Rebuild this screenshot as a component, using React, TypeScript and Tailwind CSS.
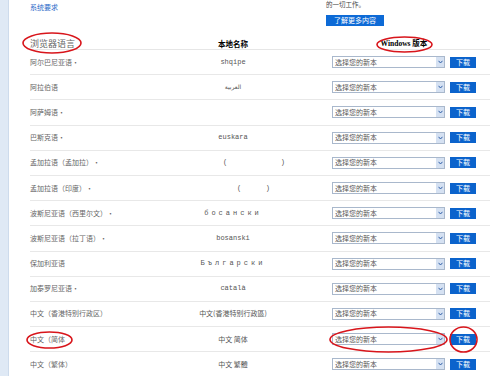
import React from "react";

type Row = { lang: string; local: React.ReactNode };

const cjk = "font-['Noto_Sans_CJK_SC',sans-serif]";
const mono = "font-['Liberation_Mono','Noto_Sans_CJK_SC',monospace]";

function Paren({ left, width }: { left: number; width: number }) {
  return (
    <div className={`w-full text-left text-[#555] ${mono}`} style={{ paddingLeft: left }}>
      <span className="inline-flex justify-between" style={{ width }}>
        <span>(</span>
        <span>)</span>
      </span>
    </div>
  );
}

const rows: Row[] = [
  { lang: "阿尔巴尼亚语•", local: <span className={mono}>shqipe</span> },
  { lang: "阿拉伯语", local: <span className="font-['DejaVu_Sans',sans-serif] text-[6px]">العربية</span> },
  { lang: "阿萨姆语•", local: "" },
  { lang: "巴斯克语•", local: <span className={mono}>euskara</span> },
  { lang: "孟加拉语（孟加拉）•", local: <Paren left={43} width={62} /> },
  { lang: "孟加拉语（印度）•", local: <Paren left={57} width={33} /> },
  { lang: "波斯尼亚语（西里尔文）•", local: <span className={`${mono} tracking-[3px]`}>босански</span> },
  { lang: "波斯尼亚语（拉丁语）•", local: <span className={mono}>bosanski</span> },
  { lang: "保加利亚语", local: <span className={`${mono} tracking-[3px]`}>Български</span> },
  { lang: "加泰罗尼亚语•", local: <span className={mono}>català</span> },
  { lang: "中文（香港特别行政区）", local: "中文(香港特别行政區)" },
  { lang: "中文（简体", local: "中文 简体" },
  { lang: "中文（繁体）", local: "中文 繁體" },
];

function VersionPicker() {
  return (
    <div className="flex items-center gap-[5px]">
      <div className="w-[113px] h-[12px] border border-[#a9b8cc] bg-white flex items-center">
        <span className="flex-1 pl-[2px] text-[7px] leading-none text-[#555]">选择您的新本</span>
        <span className="w-[8px] h-full bg-[#d5e1f2] flex items-center justify-center">
          <svg width="5" height="4" viewBox="0 0 5 4">
            <path d="M0.5 0.8 L2.5 3 L4.5 0.8" fill="none" stroke="#2f5fa8" strokeWidth="1" />
          </svg>
        </span>
      </div>
      <div className="w-[26px] h-[11px] bg-[#0b63cc] text-white text-[7px] leading-none flex items-center justify-center">
        下载
      </div>
    </div>
  );
}

function Ellipses() {
  return (
    <svg className="absolute inset-0 pointer-events-none" width="500" height="376" viewBox="0 0 500 376">
      <g fill="none" stroke="#d8151b" strokeWidth="1.6">
        <ellipse cx="52" cy="43" rx="29" ry="10" />
        <ellipse cx="404.5" cy="44.5" rx="27.5" ry="7.5" />
        <ellipse cx="49.5" cy="340" rx="22.5" ry="8" />
        <ellipse cx="388.5" cy="339.5" rx="58.5" ry="12.5" />
        <ellipse cx="463.5" cy="339.5" rx="13.5" ry="12.5" />
      </g>
    </svg>
  );
}

export default function App() {
  return (
    <div className={`relative w-[500px] h-[376px] overflow-hidden bg-white flex ${cjk}`}>
      <div className="w-[9px] h-full bg-[#dfe9f5] border-r border-[#cddbec]" />
      <div className="pl-[21px] w-[481px]">
        {/* top area */}
        <div className="h-[34px] flex">
          <div className="w-[296px] pt-[3px] text-[7px] leading-[8px] text-[#2a6ac8]">系统要求</div>
          <div className="flex flex-col">
            <div className="pt-[1px] text-[6.5px] leading-[7px] text-[#444]">的一切工作。</div>
            <div className="mt-[7px] w-[58px] h-[11px] bg-[#0d6ad6] text-white text-[7px] leading-none flex items-center justify-center">
              了解更多内容
            </div>
          </div>
        </div>

        {/* header */}
        <div className="w-[460px] h-[16px] pt-[4px] flex items-center border-b border-[#e6e6e6]">
          <div className="w-[150px] text-[9px] leading-none text-[#666]">浏览器语言</div>
          <div className="w-[106px] text-center text-[7.5px] font-bold leading-none text-black">本地名称</div>
          <div className="w-[204px] pl-[32px] flex justify-center text-[7.5px] font-bold leading-none text-black">
            <span className="font-['Liberation_Serif','Noto_Sans_CJK_SC',serif]">Windows 版本</span>
          </div>
        </div>

        {rows.map((r) => (
          <div key={r.lang} className="w-[460px] h-[25.2px] flex items-center border-b border-[#e8e8e8]">
            <div className="w-[150px] text-[7px] leading-none text-[#666]">{r.lang}</div>
            <div className="w-[106px] flex justify-center text-[7px] leading-none text-[#555] whitespace-nowrap">
              {r.local}
            </div>
            <div className="w-[204px] pl-[32px] flex justify-center">
              <VersionPicker />
            </div>
          </div>
        ))}
      </div>
      <Ellipses />
    </div>
  );
}
